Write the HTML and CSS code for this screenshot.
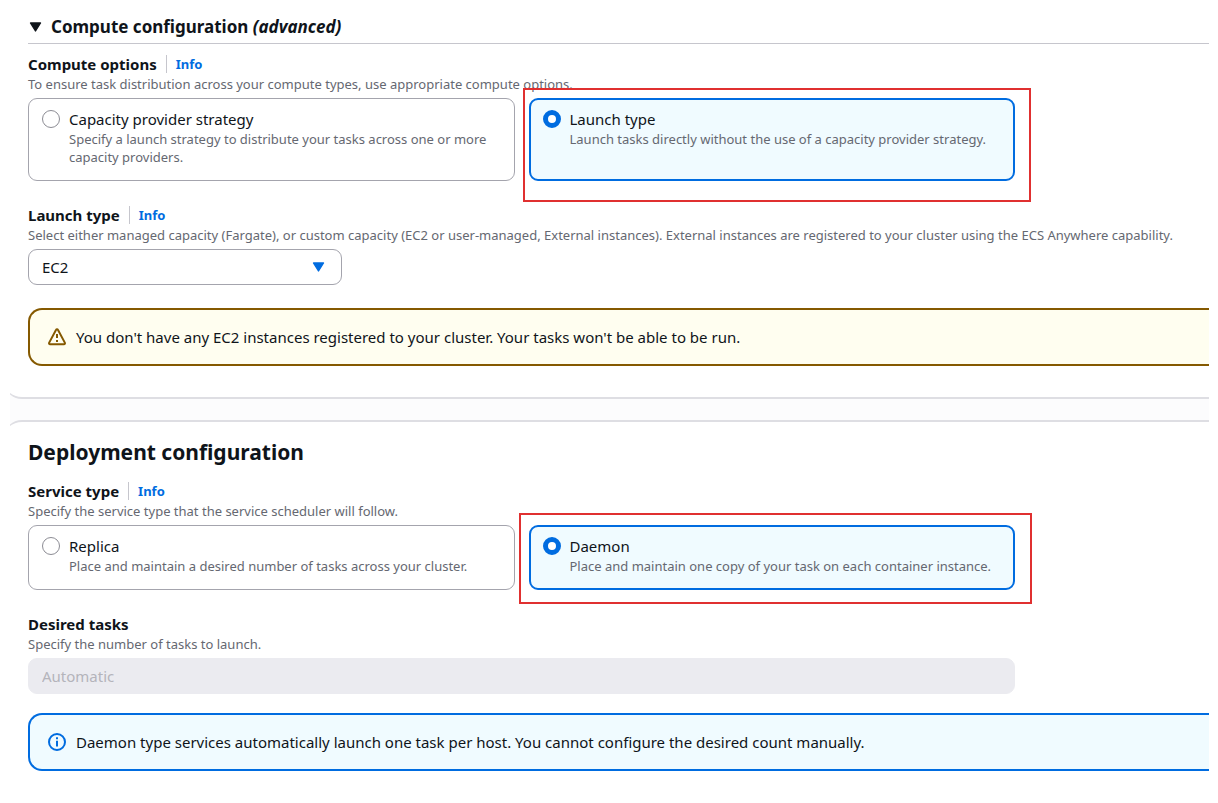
FILE: index.html
```html
<!DOCTYPE html>
<html lang="en">
<head>
<meta charset="utf-8">
<title>Create service</title>
<link rel="stylesheet" href="styles.css">
</head>
<body>
<main class="page">
  <section class="panel panel-first">
    <h2 class="expander">
      <button class="expander-button" type="button" aria-expanded="true">
        <svg class="caret" viewBox="0 0 12 10" aria-hidden="true"><path d="M1 1h10L6 9z" fill="currentColor" stroke="currentColor" stroke-width="1.4" stroke-linejoin="round"/></svg>
        <span>Compute configuration <em>(advanced)</em></span>
      </button>
    </h2>

    <div class="field" role="radiogroup" aria-labelledby="compute-label">
      <div class="label-row"><span class="label" id="compute-label">Compute options</span><a class="info" href="#">Info</a></div>
      <p class="hint">To ensure task distribution across your compute types, use appropriate compute options.</p>
      <div class="tiles">
        <label class="tile">
          <input class="radio" type="radio" name="compute">
          <span class="tile-text"><span class="tile-title">Capacity provider strategy</span><span class="tile-hint">Specify a launch strategy to distribute your tasks across one or more capacity providers.</span></span>
        </label>
        <label class="tile tile-selected">
          <input class="radio" type="radio" name="compute" checked>
          <span class="tile-text"><span class="tile-title">Launch type</span><span class="tile-hint">Launch tasks directly without the use of a capacity provider strategy.</span></span>
          <span class="marker marker-launch"></span>
        </label>
      </div>
    </div>

    <div class="field">
      <div class="label-row"><label class="label" for="launch-type">Launch type</label><a class="info" href="#">Info</a></div>
      <p class="hint">Select either managed capacity (Fargate), or custom capacity (EC2 or user-managed, External instances). External instances are registered to your cluster using the ECS Anywhere capability.</p>
      <div class="select-wrap">
        <select class="control select" id="launch-type"><option>EC2</option></select>
        <svg class="select-caret" viewBox="0 0 12 10" aria-hidden="true"><path d="M1 1h10L6 9z" fill="currentColor" stroke="currentColor" stroke-width="1.4" stroke-linejoin="round"/></svg>
      </div>
    </div>

    <div class="alert alert-warning" role="alert">
      <svg class="alert-icon" viewBox="0 0 18 18" fill="none" stroke="currentColor" stroke-width="2" stroke-linejoin="round" aria-hidden="true"><path d="M8.1 1.8 1.2 14.6c-.4.8 0 1.6.9 1.6h13.8c.9 0 1.3-.8.9-1.6L9.9 1.8c-.4-.8-1.4-.8-1.8 0z"/><path d="M9 6v4M9 12v2"/></svg>
      <span>You don't have any EC2 instances registered to your cluster. Your tasks won't be able to be run.</span>
    </div>
  </section>

  <section class="panel panel-last">
    <h2 class="heading">Deployment configuration</h2>

    <div class="field" role="radiogroup" aria-labelledby="service-label">
      <div class="label-row"><span class="label" id="service-label">Service type</span><a class="info" href="#">Info</a></div>
      <p class="hint">Specify the service type that the service scheduler will follow.</p>
      <div class="tiles">
        <label class="tile">
          <input class="radio" type="radio" name="service">
          <span class="tile-text"><span class="tile-title">Replica</span><span class="tile-hint">Place and maintain a desired number of tasks across your cluster.</span></span>
        </label>
        <label class="tile tile-selected">
          <input class="radio" type="radio" name="service" checked>
          <span class="tile-text"><span class="tile-title">Daemon</span><span class="tile-hint">Place and maintain one copy of your task on each container instance.</span></span>
          <span class="marker marker-daemon"></span>
        </label>
      </div>
    </div>

    <div class="field field-last">
      <div class="label-row"><label class="label" for="desired">Desired tasks</label></div>
      <p class="hint">Specify the number of tasks to launch.</p>
      <input class="control input" id="desired" type="text" placeholder="Automatic" disabled>
    </div>

    <div class="alert alert-info" role="status">
      <svg class="alert-icon" viewBox="0 0 18 18" fill="none" stroke="currentColor" stroke-width="2" aria-hidden="true"><circle cx="9" cy="9" r="8"/><path d="M9 4.2v2M9 7.8v5.6"/></svg>
      <span>Daemon type services automatically launch one task per host. You cannot configure the desired count manually.</span>
    </div>
  </section>
</main>
</body>
</html>
```
FILE: styles.css
```css
* { box-sizing: border-box; }

body {
  margin: 0;
  background: #fff;
  color: #0f141a;
  font: 15px/22px "Noto Sans", "Open Sans", sans-serif;
}

.page {
  display: flex;
  flex-direction: column;
  gap: 21px;
  margin: 0 9px 0 10px;
  overflow: hidden;
  background: #fcfcfd;
}

.panel {
  margin-left: -6px;
  padding-left: 24px;
  background: #fff;
}

.panel-first {
  padding-top: 14px;
  padding-bottom: 31px;
  border-bottom: 2px solid #dedee3;
  border-bottom-left-radius: 18px;
}

.panel-last {
  padding-top: 16px;
  padding-bottom: 32px;
  border-top: 2px solid #dedee3;
  border-top-left-radius: 18px;
}

.expander {
  margin: 0 0 9px;
  padding-bottom: 4px;
  border-bottom: 1px solid #c6c6cd;
}

.expander-button {
  display: flex;
  align-items: center;
  gap: 9px;
  padding: 0 0 0 1px;
  border: 0;
  background: none;
  color: inherit;
  font: bold 17px/25px "Noto Sans", sans-serif;
}

.caret, .select-caret { width: 13px; height: 10px; }

.heading {
  margin: 0 0 14px;
  font-size: 21px;
  line-height: 28px;
}

.field { margin-bottom: 23px; }
.field-last { margin-bottom: 19px; }

.label-row { display: flex; align-items: center; }
.label { font-weight: bold; }

.info {
  margin-left: 9px;
  padding-left: 9px;
  border-left: 1px solid #c6c6cd;
  color: #006ce0;
  font-size: 13px;
  font-weight: bold;
  line-height: 18px;
  text-decoration: none;
}

.hint {
  margin: 0 0 5px;
  color: #656871;
  font-size: 13px;
  line-height: 18px;
}

.tiles {
  display: grid;
  grid-template-columns: 1fr 1fr;
  gap: 14px;
  max-width: 987px;
}

.tile {
  position: relative;
  display: flex;
  gap: 9px;
  padding: 9px 13px 14px;
  border: 1px solid #a4a4ad;
  border-radius: 9px;
}

.tile-selected {
  padding: 8px 12px 13px;
  border: 2px solid #006ce0;
  background: #f0fbff;
}

.tile-text, .tile-title, .tile-hint { display: block; }

.tile-hint {
  color: #656871;
  font-size: 13px;
  line-height: 18px;
}

.radio {
  flex: none;
  appearance: none;
  width: 18px;
  height: 18px;
  margin: 2px 0 0;
  border: 1px solid #8c8c94;
  border-radius: 50%;
  background: #fff;
}

.radio:checked { border: 5px solid #006ce0; }

/* Hand-drawn call-outs around the chosen tiles */
.marker {
  position: absolute;
  border: 2px solid #e03030;
  pointer-events: none;
}

.marker-launch { inset: -12px -18px -23px -8px; }
.marker-daemon { inset: -14px -19px -16px -12px; }

.control {
  display: block;
  width: 100%;
  height: 36px;
  padding: 0 13px;
  border: 1px solid #a4a4ad;
  border-radius: 9px;
  color: inherit;
  font: inherit;
}

.select-wrap {
  position: relative;
  max-width: 314px;
}

.select { appearance: none; background: #fff; }

.select-caret {
  position: absolute;
  top: 13px;
  right: 17px;
  color: #006ce0;
  pointer-events: none;
}

.input {
  max-width: 987px;
  border-color: #ebebf0;
  background: #ebebf0;
}

.input::placeholder { color: #b4b4bb; opacity: 1; }

.alert {
  display: flex;
  align-items: center;
  gap: 10px;
  padding: 16px 18px;
  border: 2px solid;
  border-right: 0;
  border-radius: 14px 0 0 14px;
}

.alert span { color: #0f141a; }
.alert-icon { flex: none; width: 18px; height: 18px; }
.alert-warning { border-color: #855900; background: #fffef0; color: #855900; }
.alert-info { border-color: #006ce0; background: #f0fbff; color: #006ce0; }
```
